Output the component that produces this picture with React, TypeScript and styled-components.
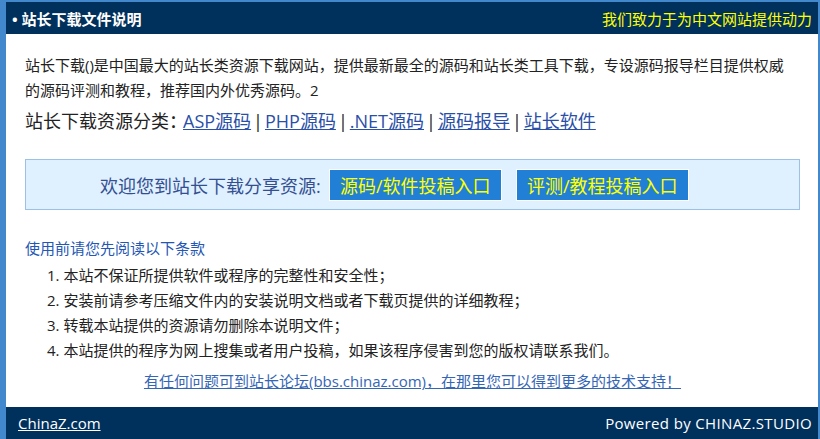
import React from "react"
import styled, { createGlobalStyle } from "styled-components"

const GlobalStyle = createGlobalStyle`
  html, body {
    margin: 0;
    padding: 0;
    background: #fff;
  }
  body {
    font-family: "Open Sans", "Noto Sans CJK SC", sans-serif;
    color: #222;
  }
`

const categories = ["ASP源码", "PHP源码", ".NET源码", "源码报导", "站长软件"]

const terms = [
  "本站不保证所提供软件或程序的完整性和安全性；",
  "安装前请参考压缩文件内的安装说明文档或者下载页提供的详细教程；",
  "转载本站提供的资源请勿删除本说明文件；",
  "本站提供的程序为网上搜集或者用户投稿，如果该程序侵害到您的版权请联系我们。",
]

const App: React.FC = () => {
  return (
    <>
      <GlobalStyle />
      <StyledFrame>
        <StyledBar>
          <StyledTitle>• 站长下载文件说明</StyledTitle>
          <StyledSlogan>我们致力于为中文网站提供动力</StyledSlogan>
        </StyledBar>

        <StyledMain>
          <StyledIntro>
            站长下载()是中国最大的站长类资源下载网站，提供最新最全的源码和站长类工具下载，专设源码报导栏目提供权威的源码评测和教程，推荐国内外优秀源码。2
          </StyledIntro>

          <StyledCategories>
            <StyledCategoryLabel>站长下载资源分类：</StyledCategoryLabel>
            {categories.map((name, i) => (
              <React.Fragment key={name}>
                {i > 0 && <StyledSep>|</StyledSep>}
                <StyledCategoryLink href="#">{name}</StyledCategoryLink>
              </React.Fragment>
            ))}
          </StyledCategories>

          <StyledShareBox>
            <StyledShareText>欢迎您到站长下载分享资源:</StyledShareText>
            <StyledShareButton href="#">源码/软件投稿入口</StyledShareButton>
            <StyledShareButton href="#">评测/教程投稿入口</StyledShareButton>
          </StyledShareBox>

          <StyledNoticeTitle>使用前请您先阅读以下条款</StyledNoticeTitle>
          <StyledTerms>
            {terms.map((term, i) => (
              <li key={i}>
                {i + 1}. {term}
              </li>
            ))}
          </StyledTerms>

          <StyledHelp>
            <a href="#">
              有任何问题可到站长论坛(bbs.chinaz.com)，在那里您可以得到更多的技术支持！
            </a>
          </StyledHelp>
        </StyledMain>

        <StyledBar>
          <StyledFooterLink href="#">ChinaZ.com</StyledFooterLink>
          <StyledPowered>Powered by CHINAZ.STUDIO</StyledPowered>
        </StyledBar>
      </StyledFrame>
    </>
  )
}

const StyledFrame = styled.div`
  height: 439px;
  box-sizing: border-box;
  border-left: 6px solid #4188cc;
  border-right: 2px solid #4188cc;
  border-top: 2px solid #4188cc;
  display: flex;
  flex-direction: column;
`

const StyledBar = styled.div`
  height: 32px;
  flex-shrink: 0;
  background: #00305c;
  display: flex;
  align-items: center;
  justify-content: space-between;
  padding: 0 6px 0 6px;
  font-size: 15px;
`

const StyledTitle = styled.div`
  color: #fff;
  font-weight: bold;
`

const StyledSlogan = styled.div`
  color: #ffff00;
`

const StyledMain = styled.div`
  flex: 1;
  padding: 19px 18px 0 19px;
  font-size: 15px;
`

const StyledIntro = styled.p`
  margin: 0 12px 0 0;
  line-height: 25px;
  color: #222;
`

const StyledCategories = styled.div`
  font-size: 18px;
  line-height: 36px;
  color: #222;
`

const StyledCategoryLabel = styled.span`
  margin-right: -4px;
`

const StyledSep = styled.span`
  margin: 0 2px;
`

const StyledCategoryLink = styled.a`
  color: #2a4fa8;
  text-decoration: underline;
`

const StyledShareBox = styled.div`
  margin-top: 20px;
  height: 51px;
  box-sizing: border-box;
  border: 1px solid #9cc1e8;
  background: #dff0ff;
  display: flex;
  align-items: center;
  gap: 14px;
  padding-left: 74px;
`

const StyledShareText = styled.span`
  font-size: 18px;
  color: #334f8f;
  margin-right: -6px;
`

const StyledShareButton = styled.a`
  display: flex;
  align-items: center;
  justify-content: center;
  width: 173px;
  height: 32px;
  box-sizing: border-box;
  border: 1px solid #fff;
  background: #2180d6;
  color: #ffff00;
  font-size: 18px;
  text-decoration: none;
`

const StyledNoticeTitle = styled.div`
  margin-top: 26px;
  line-height: 25px;
  color: #2457b4;
`

const StyledTerms = styled.ul`
  list-style: none;
  margin: 2px 0 0;
  padding: 0 0 0 22px;
  line-height: 25px;
  color: #222;
`

const StyledHelp = styled.div`
  margin-top: 6px;
  line-height: 25px;
  text-align: center;

  a {
    color: #3566b5;
    text-decoration: underline;
  }
`

const StyledFooterLink = styled.a`
  color: #fff;
  text-decoration: underline;
  padding-left: 6px;
`

const StyledPowered = styled.div`
  color: #fff;
  letter-spacing: 0.35px;
`

export default App
